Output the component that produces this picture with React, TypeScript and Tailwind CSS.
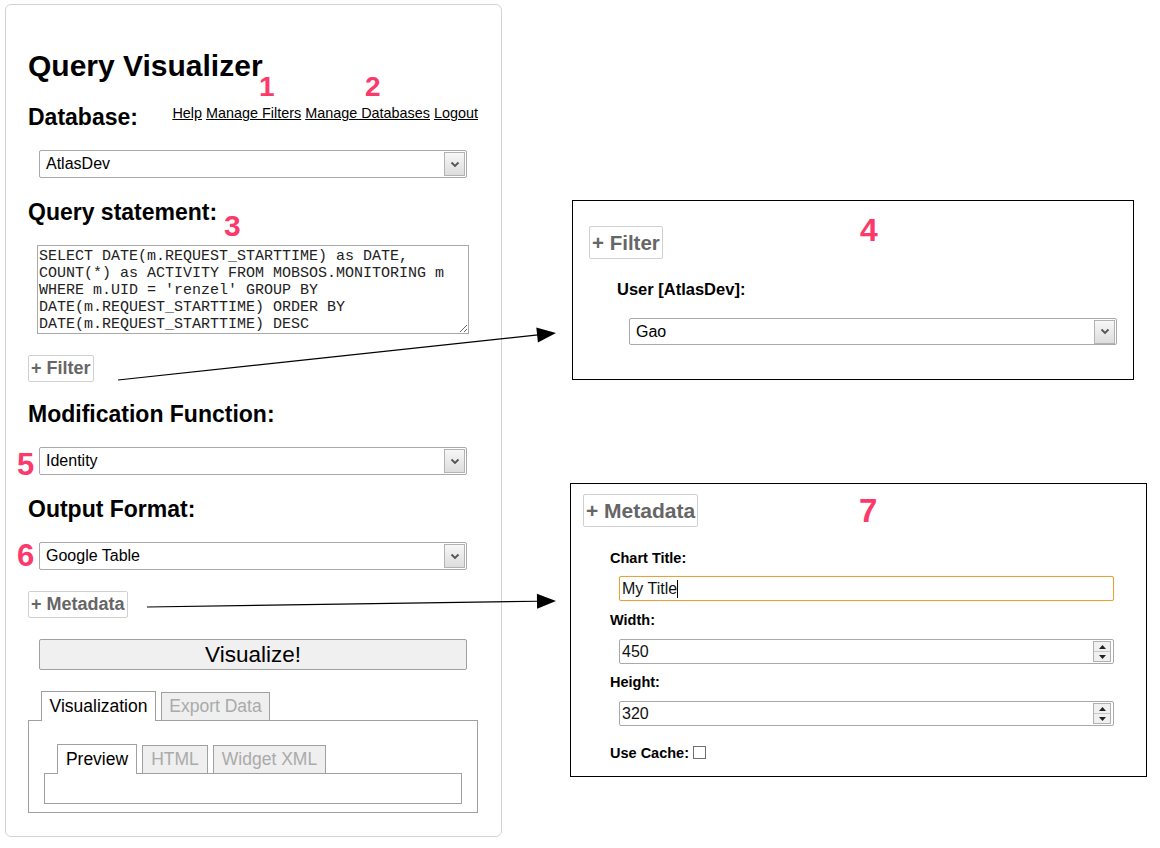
import React from "react";

const SQL = [
  "SELECT DATE(m.REQUEST_STARTTIME) as DATE,",
  "COUNT(*) as ACTIVITY FROM MOBSOS.MONITORING m",
  "WHERE m.UID = 'renzel' GROUP BY",
  "DATE(m.REQUEST_STARTTIME) ORDER BY",
  "DATE(m.REQUEST_STARTTIME) DESC",
].join("\n");

function Chevron() {
  return (
    <svg width="10" height="7" viewBox="0 0 10 7">
      <path d="M1.5 1.5 L5 5 L8.5 1.5" fill="none" stroke="#555" strokeWidth="1.8" />
    </svg>
  );
}

function FakeSelect({ value, className }: { value: string; className: string }) {
  return (
    <div className={`flex items-center justify-between rounded-[2px] border border-[#a9a9a9] bg-white ${className}`}>
      <span className="pl-[6px] text-[16px] leading-[20px] text-black">{value}</span>
      <span className="mr-[1px] flex h-[24px] w-[21px] items-center justify-center border border-[#b3b3b3] bg-linear-to-b from-[#f7f7f7] to-[#dddddd]">
        <Chevron />
      </span>
    </div>
  );
}

function Spinner() {
  return (
    <div className="mr-[2px] flex h-[21px] w-[18px] flex-col border border-[#b0b0b0] bg-[#f0f0f0]">
      <div className="flex flex-1 items-center justify-center border-b border-[#c8c8c8]">
        <svg width="7" height="4" viewBox="0 0 7 4">
          <path d="M0 4 L3.5 0 L7 4Z" fill="#222" />
        </svg>
      </div>
      <div className="flex flex-1 items-center justify-center">
        <svg width="7" height="4" viewBox="0 0 7 4">
          <path d="M0 0 L7 0 L3.5 4Z" fill="#222" />
        </svg>
      </div>
    </div>
  );
}

function NumberBox({ value }: { value: string }) {
  return (
    <div className="mt-[10px] ml-[36px] flex h-[25px] w-[495px] items-center justify-between rounded-[2px] border border-[#a9a9a9] bg-white">
      <span className="pl-[2px] text-[16px] leading-[20px] text-[#111]">{value}</span>
      <Spinner />
    </div>
  );
}

function Arrow({ x1, y1, x2, y2 }: { x1: number; y1: number; x2: number; y2: number }) {
  const dx = x2 - x1;
  const dy = y2 - y1;
  const len = Math.hypot(dx, dy);
  const ux = dx / len;
  const uy = dy / len;
  const L = 19;
  const W = 7.5;
  const bx = x2 - ux * L;
  const by = y2 - uy * L;
  const px = -uy;
  const py = ux;
  const pts = `${x2},${y2} ${bx + px * W},${by + py * W} ${bx - px * W},${by - py * W}`;
  return (
    <g>
      <line x1={x1} y1={y1} x2={bx + ux} y2={by + uy} stroke="#000" strokeWidth="1.2" />
      <polygon points={pts} fill="#000" />
    </g>
  );
}

export default function App() {
  const heading = "text-[23px] leading-[28px] font-bold";
  const addBtn = "w-fit rounded-[2px] border border-[#d0d0d0] bg-white px-[2px] font-bold text-[#666]";
  const num = "absolute font-bold leading-none text-[#fb3a6b]";

  return (
    <div className="relative h-[848px] w-[1160px] overflow-hidden bg-white pt-[4px] pl-[5px] font-['Liberation_Sans',Arial,sans-serif] text-black">
      {/* main panel */}
      <div className="h-[833px] w-[497px] rounded-[6px] border border-[#d3d3d3] pt-[44px] pr-[23px] pl-[22px]">
        <h1 className="text-[30px] leading-[34px] font-bold">Query Visualizer</h1>

        <div className="mt-[20px] flex items-start justify-between">
          <h2 className={heading}>Database:</h2>
          <div className="mt-[2px] text-[14.4px] leading-[16px] text-black">
            <a className="underline">Help</a>{" "}
            <a className="underline">Manage Filters</a>{" "}
            <a className="underline">Manage Databases</a>{" "}
            <a className="underline">Logout</a>
          </div>
        </div>

        <FakeSelect value="AtlasDev" className="mt-[19px] ml-[11px] h-[28px] w-[428px]" />

        <h2 className={`mt-[20px] ${heading}`}>Query statement:</h2>
        <textarea
          readOnly
          wrap="off"
          value={SQL}
          className="mt-[19px] ml-[9px] block h-[89px] w-[432px] overflow-hidden border border-[#a9a9a9] pt-[2px] pl-[1px] font-['Liberation_Mono','Courier_New',monospace] text-[15px] leading-[17px] text-[#222] outline-none"
        />

        <div className={`mt-[21px] h-[27px] text-[18px] leading-[25px] ${addBtn}`}>+ Filter</div>

        <h2 className={`mt-[18px] ${heading}`}>Modification Function:</h2>
        <FakeSelect value="Identity" className="mt-[19px] ml-[11px] h-[28px] w-[428px]" />

        <h2 className={`mt-[20px] ${heading}`}>Output Format:</h2>
        <FakeSelect value="Google Table" className="mt-[19px] ml-[11px] h-[28px] w-[428px]" />

        <div className={`mt-[21px] h-[27px] text-[18px] leading-[25px] ${addBtn}`}>+ Metadata</div>

        <div className="mt-[21px] ml-[11px] h-[31px] w-[428px] rounded-[2px] border border-[#a0a0a0] bg-[#f0f0f0] text-center text-[22.5px] leading-[29px] text-black">
          Visualize!
        </div>

        {/* tabs */}
        <div className="mt-[21px]">
          <div className="flex items-end gap-[5px] pl-[13px]">
            <div className="relative z-10 mb-[-1px] h-[30px] w-[115px] border border-b-0 border-[#a0a0a0] bg-white pt-[4px] text-center text-[17.5px] leading-[20px] text-black">
              Visualization
            </div>
            <div className="h-[28px] w-[109px] border border-b-0 border-[#a0a0a0] bg-[#efefef] pt-[3px] text-center text-[17.5px] leading-[20px] text-[#aaaaaa]">
              Export Data
            </div>
          </div>
          <div className="border border-[#a0a0a0] px-[15px] pt-[23px] pb-[8px]">
            <div className="flex items-end gap-[5px] pl-[13px]">
              <div className="relative z-10 mb-[-1px] h-[30px] w-[80px] border border-b-0 border-[#a0a0a0] bg-white pt-[4px] text-center text-[17.5px] leading-[20px] text-black">
                Preview
              </div>
              <div className="h-[28px] w-[66px] border border-b-0 border-[#a0a0a0] bg-[#efefef] pt-[3px] text-center text-[17.5px] leading-[20px] text-[#aaaaaa]">
                HTML
              </div>
              <div className="h-[28px] w-[113px] border border-b-0 border-[#a0a0a0] bg-[#efefef] pt-[3px] text-center text-[17.5px] leading-[20px] text-[#aaaaaa]">
                Widget XML
              </div>
            </div>
            <div className="h-[31px] border border-[#a0a0a0] bg-white" />
          </div>
        </div>
      </div>

      {/* callout 4: filter */}
      <div className="absolute top-[200px] left-[572px] h-[180px] w-[562px] border border-black bg-white pt-[25px] pl-[16px]">
        <div className={`h-[33px] text-[20.5px] leading-[31px] ${addBtn}`}>+ Filter</div>
        <div className="mt-[20px] ml-[28px] text-[16.5px] leading-[20px] font-bold">User [AtlasDev]:</div>
        <FakeSelect value="Gao" className="mt-[19px] ml-[40px] h-[27px] w-[488px]" />
      </div>

      {/* callout 7: metadata */}
      <div className="absolute top-[483px] left-[570px] h-[294px] w-[577px] border border-black bg-white pt-[10px] pl-[12px]">
        <div className={`h-[33px] text-[21px] leading-[31px] ${addBtn}`}>+ Metadata</div>
        <div className="mt-[23px] ml-[27px] text-[14.5px] leading-[17px] font-bold">Chart Title:</div>
        <div className="mt-[9px] ml-[36px] flex h-[25px] w-[495px] items-center rounded-[2px] border border-[#e2a33a] bg-white shadow-[0_0_1px_#f0c070]">
          <span className="pl-[2px] text-[16px] leading-[20px] text-[#111]">My Title</span>
          <span className="h-[18px] w-px bg-black" />
        </div>
        <div className="mt-[11px] ml-[27px] text-[14.5px] leading-[17px] font-bold">Width:</div>
        <NumberBox value="450" />
        <div className="mt-[10px] ml-[27px] text-[14.5px] leading-[17px] font-bold">Height:</div>
        <NumberBox value="320" />
        <div className="mt-[19px] ml-[27px] flex items-start gap-[4px] text-[14.5px] leading-[17px] font-bold">
          <span>Use Cache:</span>
          <span className="mt-[1px] h-[13px] w-[13px] border border-[#6f6f6f] bg-white" />
        </div>
      </div>

      {/* arrows */}
      <svg className="pointer-events-none absolute top-0 left-0" width="1160" height="848">
        <Arrow x1={118} y1={380} x2={556} y2={333} />
        <Arrow x1={147} y1={607} x2={556} y2={601} />
      </svg>

      {/* annotation numbers */}
      <span className={`${num} top-[73px] left-[259px] text-[28px]`}>1</span>
      <span className={`${num} top-[73px] left-[365px] text-[28px]`}>2</span>
      <span className={`${num} top-[211px] left-[224px] text-[30px]`}>3</span>
      <span className={`${num} top-[214px] left-[860px] text-[32px]`}>4</span>
      <span className={`${num} top-[449px] left-[17px] text-[31px]`}>5</span>
      <span className={`${num} top-[540px] left-[17px] text-[31px]`}>6</span>
      <span className={`${num} top-[494px] left-[859px] text-[33px]`}>7</span>
    </div>
  );
}
